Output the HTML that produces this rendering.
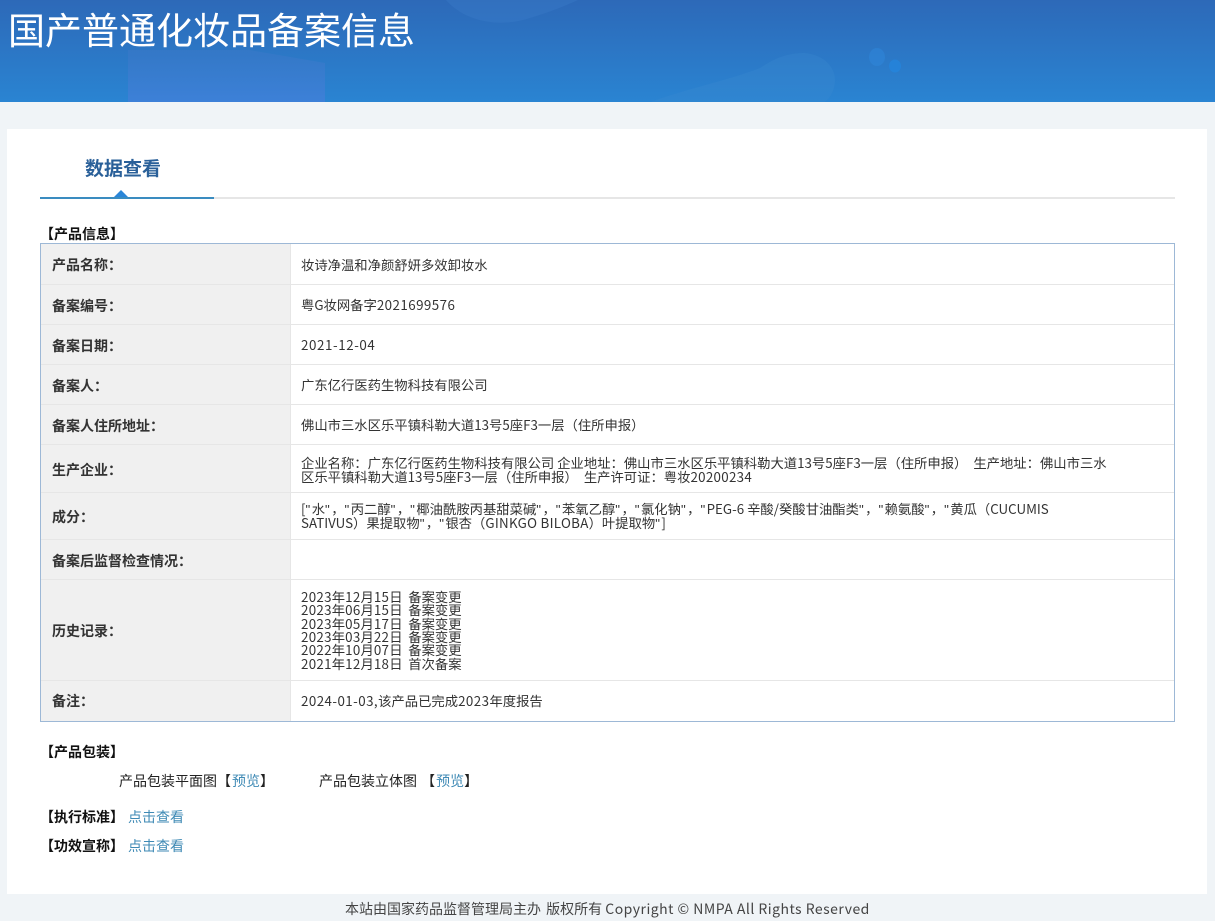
<!DOCTYPE html>
<html lang="zh-CN"><head><meta charset="utf-8"><title>国产普通化妆品备案信息</title>
<style>
html,body{margin:0;padding:0;width:1215px;height:921px;overflow:hidden;background:#f0f4f7}
body{position:relative;font-family:"Liberation Sans","Noto Sans CJK SC",sans-serif;font-size:13.33px;color:#333}
.a{position:absolute;white-space:nowrap}
.hd{position:absolute;left:0;top:0;width:1215px;height:102px;background:linear-gradient(180deg,#2d69b8 0%,#2a84d2 100%);overflow:hidden}
h1{position:absolute;left:8px;top:3px;margin:0;font:400 37px/50px "Noto Sans CJK SC",sans-serif;color:#fff;white-space:nowrap}
.panel{position:absolute;left:7px;top:129px;width:1200px;height:765px;background:#fff}
.rule{position:absolute;left:40px;top:197px;width:1135px;height:2px;background:#e6e6e6}
.rule2{position:absolute;left:40px;top:197px;width:174px;height:2px;background:#3a8cc0}
.tri{position:absolute;left:114px;top:190px;width:0;height:0;border-left:7px solid transparent;border-right:7px solid transparent;border-bottom:7px solid #2a86d8}
.tab{position:absolute;left:85px;top:154px;font:700 19px/28px "Noto Sans CJK SC",sans-serif;color:#2a6099;white-space:nowrap}
.tbl{position:absolute;left:40px;top:243px;width:1133px;height:477px;border:1px solid #9db8d6;background:#fff}
.r{position:absolute;left:0;width:1133px;border-bottom:1px solid #e6e6e6;box-sizing:border-box}
.r:last-child{border-bottom:0}
.l{position:absolute;left:0;top:0;bottom:0;width:250px;background:#f0f0f0;border-right:1px solid #e6e6e6;box-sizing:border-box;display:flex;align-items:center;padding-left:11px;font:700 14px/14px "Noto Sans CJK SC",sans-serif;color:#333}
.v{position:absolute;left:260px;right:0;top:0;bottom:0;display:flex;align-items:center;font:400 13.33px/13.33px "Noto Sans CJK SC",sans-serif;color:#333;white-space:nowrap}
.up .l,.up .v,.l.lu{padding-top:2px;box-sizing:border-box}
.n{letter-spacing:.6px}
.h{letter-spacing:.3px}
.s{letter-spacing:.3px}
.m{letter-spacing:.45px}
i{font-style:normal;font-family:"Liberation Sans",sans-serif;letter-spacing:1.44px}
.b{font:700 14px/20px "Noto Sans CJK SC",sans-serif;color:#111}
.t{font:400 14px/20px "Noto Sans CJK SC",sans-serif;color:#222}
.lk{color:#3f8ab5}
</style></head><body>
<div class="hd">
<svg width="1215" height="102" style="position:absolute;left:0;top:0">
<defs><linearGradient id="g" x1="0" y1="0" x2="0" y2="1"><stop offset="0" stop-color="#3b78c8" stop-opacity=".5"/><stop offset="1" stop-color="#3e80d8" stop-opacity=".95"/></linearGradient></defs>
<path d="M128 102V50H250L325 63V102Z" fill="url(#g)"/>
<path d="M446 0C465 22 500 28 530 18C550 12 565 6 578 0Z" fill="#3f80cc" opacity=".3"/>
<path d="M650 102C690 88 735 78 760 68C778 56 790 53 805 53C825 55 835 68 835 80C835 90 830 98 825 102Z" fill="#3a8ad2" opacity=".3"/>
<ellipse cx="877" cy="57" rx="8" ry="9" fill="#2f86d8" opacity=".6"/>
<ellipse cx="895" cy="66" rx="6" ry="6.5" fill="#2484dc" opacity=".8"/>
</svg>
<h1>国产普通化妆品备案信息</h1>
</div>
<div class="panel"></div>
<div class="tab">数据查看</div>
<div class="rule"></div><div class="rule2"></div><div class="tri"></div>
<div class="a b" style="left:40px;top:224px">【产品信息】</div>
<div class="tbl">
<div class="r up" style="top:0;height:41px"><div class="l">产品名称：</div><div class="v"><span>妆诗净温和净颜舒妍多效卸妆水</span></div></div>
<div class="r" style="top:41px;height:40px"><div class="l lu">备案编号：</div><div class="v"><span>粤G妆网备字<span class="m">2021699576</span></span></div></div>
<div class="r" style="top:81px;height:40px"><div class="l lu">备案日期：</div><div class="v"><span class="n">2021-12-04</span></div></div>
<div class="r" style="top:121px;height:40px"><div class="l lu">备案人：</div><div class="v"><span>广东亿行医药生物科技有限公司</span></div></div>
<div class="r" style="top:161px;height:40px"><div class="l lu">备案人住所地址：</div><div class="v"><span>佛山市三水区乐平镇科勒大道13号5座F3一层（住所申报）</span></div></div>
<div class="r up" style="top:201px;height:48px"><div class="l">生产企业：</div><div class="v"><span>企业名称：广东亿行医药生物科技有限公司 企业地址：佛山市三水区乐平镇科勒大道13号5座F3一层（住所申报） &nbsp;生产地址：佛山市三水<br>区乐平镇科勒大道13号5座F3一层（住所申报） &nbsp;生产许可证：粤妆<span class="s">20200234</span></span></div></div>
<div class="r" style="top:249px;height:47px"><div class="l lu">成分：</div><div class="v"><span>[<i>"</i>水<i>"</i>，<i>"</i>丙二醇<i>"</i>，<i>"</i>椰油酰胺丙基甜菜碱<i>"</i>，<i>"</i>苯氧乙醇<i>"</i>，<i>"</i>氯化钠<i>"</i>，<i>"</i>PEG-6 辛酸/癸酸甘油酯类<i>"</i>，<i>"</i>赖氨酸<i>"</i>，<i>"</i>黄瓜（CUCUMIS<br>SATIVUS）果提取物<i>"</i>，<i>"</i>银杏（<span class="s">GINKGO BILOBA</span>）叶提取物<i>"</i>]</span></div></div>
<div class="r" style="top:296px;height:40px"><div class="l lu">备案后监督检查情况：</div><div class="v"></div></div>
<div class="r" style="top:336px;height:101px"><div class="l lu">历史记录：</div><div class="v"><span><span class="h">2023</span>年<span class="h">12</span>月<span class="h">15</span>日 &thinsp;备案变更<br><span class="h">2023</span>年<span class="h">06</span>月<span class="h">15</span>日 &thinsp;备案变更<br><span class="h">2023</span>年<span class="h">05</span>月<span class="h">17</span>日 &thinsp;备案变更<br><span class="h">2023</span>年<span class="h">03</span>月<span class="h">22</span>日 &thinsp;备案变更<br><span class="h">2022</span>年<span class="h">10</span>月<span class="h">07</span>日 &thinsp;备案变更<br><span class="h">2021</span>年<span class="h">12</span>月<span class="h">18</span>日 &thinsp;首次备案</span></div></div>
<div class="r" style="top:437px;height:40px"><div class="l">备注：</div><div class="v"><span><span class="m">2024-01-03,</span>该产品已完成<span class="m">2023</span>年度报告</span></div></div>
</div>
<div class="a b" style="left:40px;top:742px">【产品包装】</div>
<div class="a t" style="left:119px;top:771px">产品包装平面图【<span class="lk" style="margin-left:1px">预览</span>】</div>
<div class="a t" style="left:319px;top:771px">产品包装立体图 <span style="margin-left:1px">【</span><span class="lk" style="margin-left:1px">预览</span>】</div>
<div class="a b" style="left:40px;top:807px">【执行标准】</div>
<div class="a t lk" style="left:128px;top:807px">点击查看</div>
<div class="a b" style="left:40px;top:836px">【功效宣称】</div>
<div class="a t lk" style="left:128px;top:836px">点击查看</div>
<div class="a t" style="left:345px;top:899px;color:#444">本站由国家药品监督管理局主办 <span style="margin-left:2px">版权所有</span> <span style="letter-spacing:.48px">Copyright © NMPA All Rights Reserved</span></div>
</body></html>
